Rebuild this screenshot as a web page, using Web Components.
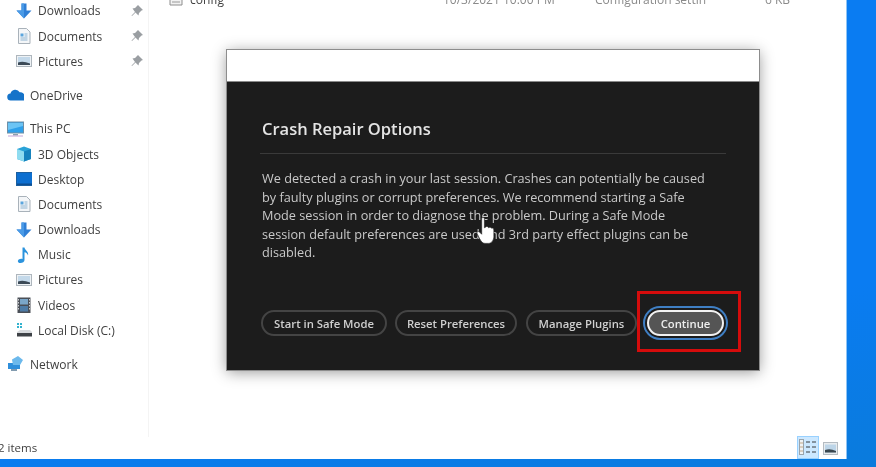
<!doctype html>
<html>
<head>
<meta charset="utf-8">
<style>
  html, body { margin: 0; padding: 0; height: 100%; overflow: hidden; background: #0a7cf2; }
</style>
</head>
<body>
<app-desktop>
  <file-window>
    <nav-item slot="nav" icon="downloads" sub pinned>Downloads</nav-item>
    <nav-item slot="nav" icon="documents" sub pinned>Documents</nav-item>
    <nav-item slot="nav" icon="pictures" sub pinned>Pictures</nav-item>
    <nav-item slot="nav" icon="onedrive" group>OneDrive</nav-item>
    <nav-item slot="nav" icon="monitor" group>This PC</nav-item>
    <nav-item slot="nav" icon="cube" sub>3D Objects</nav-item>
    <nav-item slot="nav" icon="desktop" sub>Desktop</nav-item>
    <nav-item slot="nav" icon="documents" sub>Documents</nav-item>
    <nav-item slot="nav" icon="downloads" sub>Downloads</nav-item>
    <nav-item slot="nav" icon="music" sub>Music</nav-item>
    <nav-item slot="nav" icon="pictures" sub>Pictures</nav-item>
    <nav-item slot="nav" icon="videos" sub>Videos</nav-item>
    <nav-item slot="nav" icon="disk" sub>Local Disk (C:)</nav-item>
    <nav-item slot="nav" icon="network" group>Network</nav-item>
    <file-row slot="files" name="config" date="10/3/2021 10:00 PM" type="Configuration settin" size="6 KB"></file-row>
    <crash-dialog slot="overlay" heading="Crash Repair Options">
      We detected a crash in your last session. Crashes can potentially be caused by faulty plugins or corrupt preferences. We recommend starting a Safe Mode session in order to diagnose the problem. During a Safe Mode session default preferences are used and 3rd party effect plugins can be disabled.
      <pill-button slot="actions" style="width:126px">Start in Safe Mode</pill-button>
      <pill-button slot="actions" style="width:122px">Reset Preferences</pill-button>
      <pill-button slot="actions" style="width:111px;margin-left:1px">Manage Plugins</pill-button>
      <pill-button slot="actions" style="width:77px;margin-left:2px" primary>Continue</pill-button>
    </crash-dialog>
    <span slot="status">2 items</span>
  </file-window>
</app-desktop>

<script>
const ICONS = {
  downloads: `<path d="M5.500 0.500h5v7h5L8 15.500 0.500 7.500h5z" fill="#2f7fd6"/><path d="M5.500 0.500h2.500v15L0.500 7.500h5z" fill="#4a9ae6"/>`,
  documents: `<path d="M2.500 0.500h8l3.500 3.500v11.500h-11.500z" fill="#f4f6f8" stroke="#a9b2ba"/><path d="M4.500 5.500h3v3h-3z" fill="#5aa5dd"/><path d="M4.500 10h7M4.500 12h7M8.500 6h3M8.500 8h3" stroke="#8fb4d0"/>`,
  pictures: `<rect x="0.500" y="2.500" width="15" height="11" fill="#eef2f5" stroke="#aeb6bd"/><rect x="2" y="4" width="12" height="8" fill="#c4d9ea"/><path d="M2 12V9.500q5-2 12 1V12z" fill="#3c4a57"/>`,
  onedrive: `<path d="M4 13.500a3.500 3.500 0 0 1-.5-7 5 5 0 0 1 9.200-1.200 4 4 0 0 1 4.800 4.200 2.200 2.200 0 0 1-.5 4z" fill="#1573c9"/>`,
  monitor: `<rect x="0.500" y="1" width="16" height="11" fill="#2ea0ea" stroke="#6f8fa5"/><path d="M1 2h15v3L1 9z" fill="#6cc4f4"/><path d="M6 13h5v1.500H6z" fill="#8ba0ae"/><path d="M1 15h15" stroke="#c3a6d8"/>`,
  cube: `<path d="M8 0.500l7 2.500v10l-7 2.500-7-2.500V3z" fill="#2aa3d8"/><path d="M1 3l7 2.500v10l-7-2.500z" fill="#8fdcf0"/><path d="M8 5.500l7-2.500v10l-7 2.500z" fill="#1682bd"/>`,
  desktop: `<rect x="0.500" y="1.500" width="16" height="13" fill="#0d6fd0" stroke="#1c5f9f"/><path d="M1 12.500h15v1.500H1z" fill="#0c4e92"/>`,
  music: `<path d="M6.500 0.500h2c.5 3 4.500 4 3.500 8-.5-2-2-3-3.500-3.300V13c0 2-2 3-4 3s-3-1.200-2.500-2.500 2.500-2.200 4.500-1.500z" fill="#2b93dd"/>`,
  videos: `<rect x="1.500" y="0.500" width="13" height="15.500" fill="#4a4f57"/><rect x="4" y="2" width="8" height="5.500" fill="#7aa6c9"/><rect x="4" y="9" width="8" height="5.500" fill="#4d7ba6"/><path d="M2.500 2v12M13.500 2v12" stroke="#c9ccd0" stroke-dasharray="1.500 1.500"/>`,
  disk: `<path d="M1 1h2v2H1zM4 1h2v2H4zM1 4h2v2H1zM4 4h2v2H4z" fill="#34b3cf"/><path d="M1 10l3-2h10l2 2v4H1z" fill="#d7dadd"/><rect x="1" y="11" width="15" height="3.500" fill="#3e4247"/>`,
  network: `<path d="M1 7h12v6H1z" fill="#2f8fdb"/><path d="M5 3.500L11 0l5 4-3 5H6z" fill="#6cb9ec"/><path d="M4 14h6" stroke="#587a94" stroke-width="1.500"/>`,
  file: `<path d="M1 2h12v11H1z" fill="#f2f2f2" stroke="#8e8e8e"/><path d="M3 5h8M3 7.500h8M3 10h8" stroke="#9a9a9a"/>`
};

class AppDesktop extends HTMLElement {
  constructor() {
    super();
    this.attachShadow({ mode: "open" }).innerHTML = `
      <style>
        :host {
          display: block;
          width: 876px;
          height: 467px;
          overflow: hidden;
          background: linear-gradient(170deg, #0a6edc 0%, #0a7cf2 8%, #0a7cf2 70%, #0a7bdc 100%);
          filter: blur(0.45px);
        }
      </style>
      <slot></slot>
    `;
  }
}

class FileWindow extends HTMLElement {
  constructor() {
    super();
    this.attachShadow({ mode: "open" }).innerHTML = `
      <style>
        :host {
          display: grid;
          grid-template-rows: 437px 22px;
          width: 846px;
          height: 459px;
          position: relative;
          background: #fff;
          box-shadow: 1px 0 0 #8fc4f5;
          font-family: "Open Sans", "Liberation Sans", sans-serif;
          overflow: hidden;
        }
        .main { display: grid; grid-template-columns: 149px 1fr; min-height: 0; }
        .nav { border-right: 1px solid #f4f4f4; margin-top: -1.700px; display: flex; flex-direction: column; }
        .files { min-width: 0; }
        .status {
          display: flex;
          align-items: center;
          justify-content: space-between;
          font-size: 11.500px;
          color: #3f3f3f;
          margin-left: -2px;
        }
        .status > span { margin-bottom: 2px; }
        .views { display: flex; align-items: center; gap: 4px; margin-right: 8px; align-self: stretch; }
        .details {
          width: 22px; height: 23px; margin-top: -2px; box-sizing: border-box;
          background: #cce8ff; border: 1px solid #99d1ff;
          display: flex; align-items: center; justify-content: center;
        }
        .large { width: 15px; height: 13px; }
        svg { display: block; }
      </style>
      <div class="main">
        <div class="nav"><slot name="nav"></slot></div>
        <div class="files"><slot name="files"></slot></div>
      </div>
      <div class="status">
        <span><slot name="status"></slot></span>
        <div class="views">
          <div class="details">
            <svg width="18" height="16" viewBox="0 0 18 16"><rect x="0.500" y="0.500" width="4" height="15" fill="#eef2f5" stroke="#9aa4ab"/><path d="M1 4h3M1 8h3M1 12h3" stroke="#c4a98a"/><path d="M7 3h4M13 3h4M7 8h4M13 8h4M7 13h4M13 13h4" stroke="#6b7680" stroke-width="1.500"/></svg>
          </div>
          <div class="large">
            <svg width="15" height="13" viewBox="0 0 15 13"><rect x="0.500" y="0.500" width="14" height="12" fill="#e8ecef" stroke="#b4bbc1"/><rect x="2" y="2.500" width="11" height="8" fill="#bdd5e8"/><path d="M2 10.500V8q5-2 11 1v1.500z" fill="#39464f"/></svg>
          </div>
        </div>
      </div>
      <slot name="overlay"></slot>
    `;
  }
}

class NavItem extends HTMLElement {
  constructor() {
    super();
    this.attachShadow({ mode: "open" });
  }

  connectedCallback() {
    const sub = this.hasAttribute("sub");
    const pin = this.hasAttribute("pinned")
      ? `<svg class="pin" width="12" height="12" viewBox="0 0 12 12"><path d="M7 0l5 5-1.500.6-2.500 2.500-.5 2.400L4.500 7.500 1 11l-.5-.5L4 7 1.500 3.500 4 3l2.500-2.500z" fill="#9a9ea2"/></svg>`
      : "";
    this.shadowRoot.innerHTML = `
      <style>
        :host {
          display: flex;
          align-items: center;
          flex: none;
          height: 25.200px;
          box-sizing: border-box;
          padding-left: ${sub ? 16 : 7}px;
          font-size: 12px;
          color: #3f3f3f;
          position: relative;
        }
        :host([group]) { margin-top: 8.600px; }
        .icon { width: ${sub ? 16 : 17}px; height: 16px; flex: none; margin-right: 6px; }
        .pin { margin-left: auto; margin-right: 5px; }
        svg { display: block; }
      </style>
      <svg class="icon" viewBox="0 0 ${sub ? 16 : 17} 16">${ICONS[this.getAttribute("icon")]}</svg>
      <span><slot></slot></span>
      ${pin}
    `;
  }
}

class FileRow extends HTMLElement {
  constructor() {
    super();
    this.attachShadow({ mode: "open" });
  }

  connectedCallback() {
    const name = this.getAttribute("name");
    this.shadowRoot.innerHTML = `
      <style>
        :host {
          display: grid;
          grid-template-columns: 21px 253px 152px 170px auto;
          align-items: center;
          height: 18px;
          margin-top: -10px;
          padding-left: 20px;
          font-size: 12px;
          color: #8a8a8a;
        }
        .name { color: #3f3f3f; }
        svg { display: block; }
      </style>
      <svg width="14" height="14" viewBox="0 0 14 14">${ICONS.file}</svg>
      <span class="name">${name}</span>
      <span>${this.getAttribute("date")}</span>
      <span>${this.getAttribute("type")}</span>
      <span>${this.getAttribute("size")}</span>
    `;
  }
}

class CrashDialog extends HTMLElement {
  constructor() {
    super();
    this.attachShadow({ mode: "open" });
  }

  connectedCallback() {
    this.shadowRoot.innerHTML = `
      <style>
        :host {
          display: flex;
          flex-direction: column;
          position: absolute;
          left: 227px;
          top: 50px;
          width: 532px;
          height: 320px;
          background: #1c1c1c;
          box-shadow: 0 0 0 1px #8d8d8d, 0 2px 14px rgba(0, 0, 0, 0.42);
          font-family: "Open Sans", "Noto Sans", sans-serif;
        }
        .chrome { height: 31px; background: #fff; border-bottom: 1px solid #8a8a8a; flex: none; }
        .body { padding: 35px 33px 0 33px; display: flex; flex-direction: column; flex: 1; position: relative; }
        h1 {
          margin: 0 0 0 2px;
          font-size: 16.500px;
          line-height: 24px;
          font-weight: 600;
          color: #e4e4e4;
        }
        hr { margin: 12px 0 15px; border: 0; border-top: 1px solid #3a3a3a; }
        p {
          margin: 0 0 0 2px;
          width: 450px;
          font-size: 12.700px;
          line-height: 18.500px;
          color: #c9c9c9;
        }
        .actions { display: flex; gap: 8px; margin-top: auto; margin-bottom: 34px; margin-left: 1px; }
        .mark {
          position: absolute;
          left: 410px;
          top: 209px;
          width: 104px;
          height: 61px;
          box-sizing: border-box;
          border: 3px solid #d50c0c;
        }
        .cursor { position: absolute; left: 249px; top: 135px; }
      </style>
      <div class="chrome"></div>
      <div class="body">
        <h1>${this.getAttribute("heading")}</h1>
        <hr>
        <p><slot></slot></p>
        <div class="actions"><slot name="actions"></slot></div>
        <div class="mark"></div>
        <svg class="cursor" width="20" height="28" viewBox="0 0 18 26">
          <path d="M5 1.500c0-1.500 2.500-1.500 2.500 0V10l1-.5c.5-1 2.200-1 2.500 0l.5.500c.7-.8 2.200-.6 2.500.4.800-.3 2.300 0 2.300 1.600v6c0 3-1.800 6.500-4.800 6.500H8c-2.500 0-3.500-2-5-4.500L.8 15.500c-.8-1.500 1-2.700 2.200-1.500L5 16z" fill="#fff" stroke="#222" stroke-width="0.600"/>
        </svg>
      </div>
    `;
  }
}

class PillButton extends HTMLElement {
  constructor() {
    super();
    this.attachShadow({ mode: "open" }).innerHTML = `
      <style>
        :host {
          display: inline-flex;
          align-items: center;
          justify-content: center;
          flex: none;
          height: 26px;
          box-sizing: border-box;
          border: 2px solid #444;
          border-radius: 13px;
          font-family: "Open Sans", "Noto Sans", sans-serif;
          font-size: 11.300px;
          font-weight: 600;
          color: #cfcfcf;
          white-space: nowrap;
        }
        :host([primary]) {
          background: #555;
          border-color: #f2f2f2;
          color: #eee;
          box-shadow: 0 0 0 2px #1c1c1c, 0 0 0 4px #3f7fc4;
        }
      </style>
      <slot></slot>
    `;
  }
}

customElements.define("app-desktop", AppDesktop);
customElements.define("file-window", FileWindow);
customElements.define("nav-item", NavItem);
customElements.define("file-row", FileRow);
customElements.define("crash-dialog", CrashDialog);
customElements.define("pill-button", PillButton);
</script>
</body>
</html>
